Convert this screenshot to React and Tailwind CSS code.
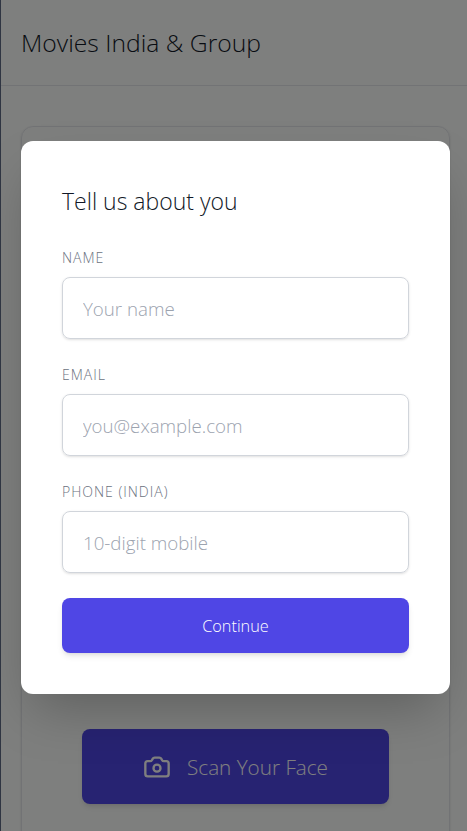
import React from "react";
import { Camera } from "lucide-react";

const fields = [
  { label: "NAME", placeholder: "Your name", type: "text" },
  { label: "EMAIL", placeholder: "you@example.com", type: "email" },
  { label: "PHONE (INDIA)", placeholder: "10-digit mobile", type: "tel" },
];

const App = () => {
  return (
    <div className="relative h-[831px] w-full overflow-hidden border-l border-[#2f3542] bg-[#fdfffd] font-['Open_Sans',sans-serif] font-light text-[#1f2937]">
      {/* PAGE BEHIND THE DIALOG */}
      <header className="flex h-[86px] items-center border-b border-[#e5e7eb] px-5">
        <h1 className="text-[24.7px] font-light text-[#111827]">Movies India &amp; Group</h1>
      </header>

      <main className="pt-10 pr-[17px] pl-5">
        <div className="flex h-[760px] flex-col items-center justify-end rounded-xl border border-[#e5e7eb] pb-[81px] shadow-sm">
          <button className="flex h-[75px] w-[307px] items-center justify-center gap-4 rounded-lg bg-[#4f46e5] pt-[2px] text-[20.7px] font-light text-white shadow-md">
            <Camera size={28} strokeWidth={2} className="-mt-[2px]" />
            Scan Your Face
          </button>
        </div>
      </main>

      {/* OVERLAY + DIALOG */}
      <div className="absolute inset-0 flex items-start justify-start bg-black/50 pt-[141px] pl-5">
        <div className="h-[553px] w-[429px] rounded-xl bg-white px-[41px] pt-[43px] shadow-2xl">
          <h2 className="mb-[31px] text-[23px] leading-[34px] font-light text-[#111827]">Tell us about you</h2>
          <div className="flex flex-col gap-[27px]">
            {fields.map((f) => (
              <div key={f.label}>
                <label className="mb-[10px] block h-[18px] text-[14px] leading-[17px] font-light tracking-[1px] text-[#6b7280]">
                  {f.label}
                </label>
                <input
                  type={f.type}
                  placeholder={f.placeholder}
                  className="h-[62px] w-full rounded-lg border border-[#d1d5db] px-5 text-[18.7px] font-light shadow-sm outline-none placeholder:text-[#9ca3af]"
                />
              </div>
            ))}
          </div>
          <button className="mt-[25px] h-[55px] w-full rounded-lg bg-[#4f46e5] pt-[2px] text-[16.3px] font-light text-white shadow-md">
            Continue
          </button>
        </div>
      </div>
    </div>
  );
};

export default App;
